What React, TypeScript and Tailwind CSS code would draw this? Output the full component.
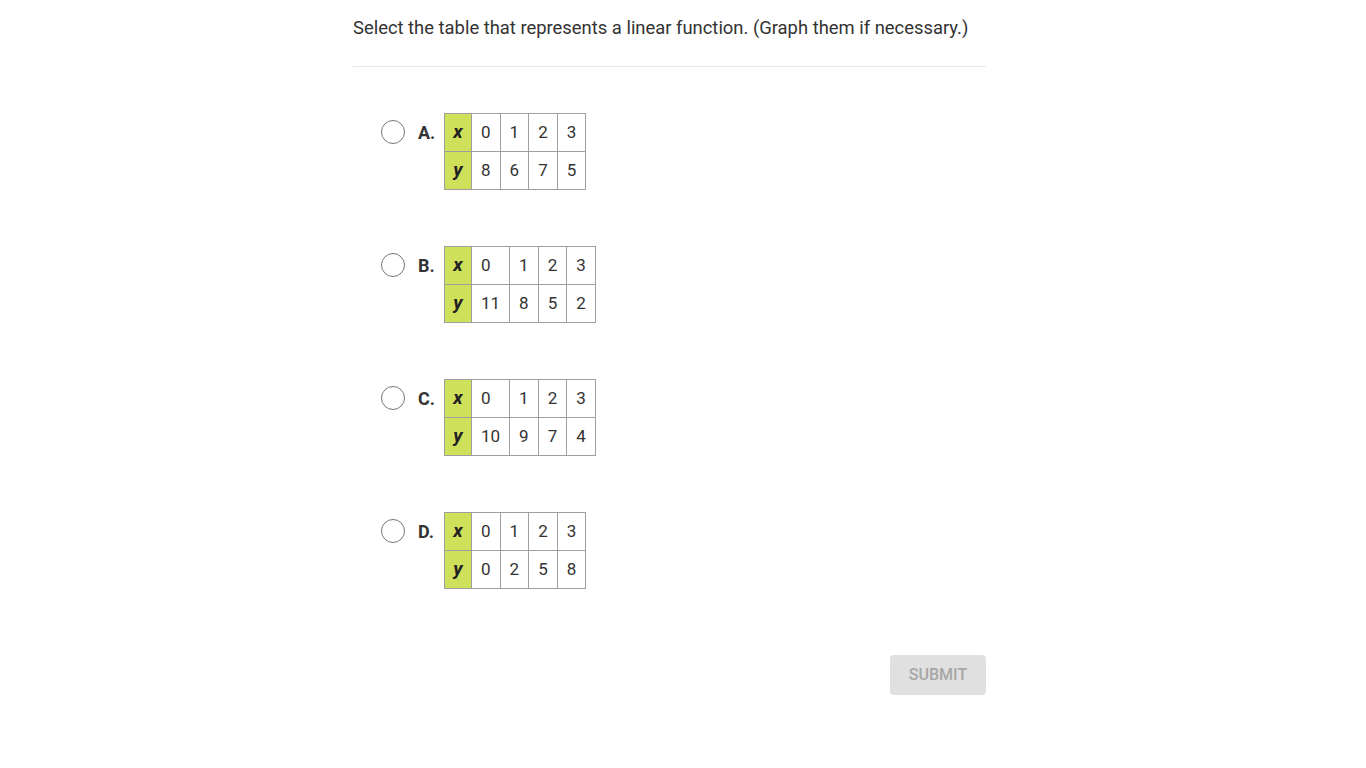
const options = [
  { label: 'A.', xs: ['0', '1', '2', '3'], ys: ['8', '6', '7', '5'] },
  { label: 'B.', xs: ['0', '1', '2', '3'], ys: ['11', '8', '5', '2'] },
  { label: 'C.', xs: ['0', '1', '2', '3'], ys: ['10', '9', '7', '4'] },
  { label: 'D.', xs: ['0', '1', '2', '3'], ys: ['0', '2', '5', '8'] },
];

const ValueTable = ({ xs, ys }: { xs: string[]; ys: string[] }) => {
  const rows = [
    { head: 'x', values: xs },
    { head: 'y', values: ys },
  ];
  return (
    <table className="border-collapse text-[17px] text-[#333]">
      <tbody>
        {rows.map((row) => (
          <tr key={row.head}>
            <td className="h-[38px] w-[27px] border border-[#9e9e9e] bg-[#cfe05a] p-0 text-center text-[19px] font-bold italic text-[#222]">
              {row.head}
            </td>
            {row.values.map((v, i) => (
              <td key={i} className="h-[38px] border border-[#9e9e9e] px-[9px] py-0 text-left">
                {v}
              </td>
            ))}
          </tr>
        ))}
      </tbody>
    </table>
  );
};

export default function App() {
  return (
    <div className="min-h-screen bg-white font-['Roboto',sans-serif]">
      <div className="ml-[353px] w-[633px] pt-[14px]">
        <p className="text-[18.4px] leading-[27px] text-[#333]">
          Select the table that represents a linear function. (Graph them if necessary.)
        </p>
        <div className="mt-[25px] h-[1px] bg-[#e6e6e6]" />

        <div className="mt-[46px] flex flex-col gap-[56px]">
          {options.map((opt) => (
            <div key={opt.label} className="flex items-start pl-[28px]">
              <div className="mt-[7px] h-[24px] w-[24px] rounded-full border-[1.5px] border-[#757575]" />
              <div className="ml-[13px] flex h-[38px] w-[26px] items-center text-[18px] font-bold text-[#333]">
                {opt.label}
              </div>
              <ValueTable xs={opt.xs} ys={opt.ys} />
            </div>
          ))}
        </div>

        <div className="mt-[66px] flex justify-end">
          <button className="h-[40px] w-[96px] rounded-[4px] bg-[#e0e0e0] text-[16px] font-medium text-[#a6a6a6]">
            SUBMIT
          </button>
        </div>
      </div>
    </div>
  );
}
